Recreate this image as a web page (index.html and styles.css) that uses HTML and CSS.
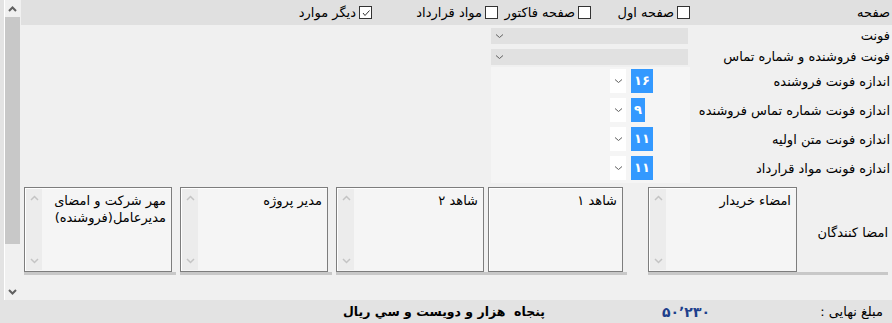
FILE: index.html
```html
<!DOCTYPE html>
<html lang="fa">
<head>
  <meta charset="UTF-8">
  <title>تنظیمات چاپ فاکتور</title>
  <link rel="stylesheet" href="styles.css">
</head>
<body>

<div class="window">
  <div class="panel">
    <div class="edge"></div>
    <div class="vscroll">
      <div class="vscroll-btn">
        <svg width="9" height="6" viewBox="0 0 9 6"><polyline points="1,5 4.5,1.5 8,5" fill="none" stroke="#606060" stroke-width="2"/></svg>
      </div>
      <div class="vscroll-thumb"></div>
      <div class="vscroll-btn bottom">
        <svg width="9" height="6" viewBox="0 0 9 6"><polyline points="1,1 4.5,4.5 8,1" fill="none" stroke="#606060" stroke-width="2"/></svg>
      </div>
    </div>

    <div class="content" dir="rtl">
      <div class="row row-head">
        <div class="label">صفحه</div>
        <div class="checks">
          <label class="check check-1"><span class="box"></span>صفحه اول</label>
          <label class="check check-2"><span class="box"></span>صفحه فاکتور</label>
          <label class="check check-3"><span class="box"></span>مواد قرارداد</label>
          <label class="check"><span class="box checked">
            <svg width="10" height="10" viewBox="0 0 10 10"><polyline points="2,5 4,7.5 8.5,2.5" fill="none" stroke="#333" stroke-width="1"/></svg>
          </span>دیگر موارد</label>
        </div>
      </div>

      <div class="row row-font">
        <div class="label">فونت</div>
        <div class="combo">
          <svg width="9" height="6" viewBox="0 0 9 6"><polyline points="1,1.5 4.5,4.5 8,1.5" fill="none" stroke="#606060" stroke-width="1"/></svg>
        </div>
      </div>
      <div class="row row-font">
        <div class="label">فونت فروشنده و شماره تماس</div>
        <div class="combo">
          <svg width="9" height="6" viewBox="0 0 9 6"><polyline points="1,1.5 4.5,4.5 8,1.5" fill="none" stroke="#606060" stroke-width="1"/></svg>
        </div>
      </div>

      <div class="size-rows">
        <div class="row row-size">
          <div class="label">اندازه فونت فروشنده</div>
          <div class="size-cell">
            <div class="size-combo">
              <div class="size-btn"><svg width="9" height="6" viewBox="0 0 9 6"><polyline points="1,1.5 4.5,4.5 8,1.5" fill="none" stroke="#606060" stroke-width="1"/></svg></div>
              <div class="size-text"><span class="sel">۱۶</span></div>
            </div>
          </div>
        </div>
        <div class="row row-size">
          <div class="label">اندازه فونت شماره تماس فروشنده</div>
          <div class="size-cell">
            <div class="size-combo">
              <div class="size-btn"><svg width="9" height="6" viewBox="0 0 9 6"><polyline points="1,1.5 4.5,4.5 8,1.5" fill="none" stroke="#606060" stroke-width="1"/></svg></div>
              <div class="size-text"><span class="sel">۹</span></div>
            </div>
          </div>
        </div>
        <div class="row row-size">
          <div class="label">اندازه فونت متن اولیه</div>
          <div class="size-cell">
            <div class="size-combo">
              <div class="size-btn"><svg width="9" height="6" viewBox="0 0 9 6"><polyline points="1,1.5 4.5,4.5 8,1.5" fill="none" stroke="#606060" stroke-width="1"/></svg></div>
              <div class="size-text"><span class="sel">۱۱</span></div>
            </div>
          </div>
        </div>
        <div class="row row-size">
          <div class="label">اندازه فونت مواد قرارداد</div>
          <div class="size-cell">
            <div class="size-combo">
              <div class="size-btn"><svg width="9" height="6" viewBox="0 0 9 6"><polyline points="1,1.5 4.5,4.5 8,1.5" fill="none" stroke="#606060" stroke-width="1"/></svg></div>
              <div class="size-text"><span class="sel">۱۱</span></div>
            </div>
          </div>
        </div>
      </div>

      <div class="row row-sign">
        <div class="label label-sign">امضا کنندگان</div>
        <div class="signs">
          <div class="sig sig-1">
            <div class="sig-box">
              <div class="sig-text">امضاء خریدار</div>
              <div class="sig-scroll">
                <svg width="9" height="6" viewBox="0 0 9 6"><polyline points="1,5 4.5,1.5 8,5" fill="none" stroke="#c4c4c4" stroke-width="1.5"/></svg>
                <svg width="9" height="6" viewBox="0 0 9 6"><polyline points="1,1 4.5,4.5 8,1" fill="none" stroke="#c4c4c4" stroke-width="1.5"/></svg>
              </div>
            </div>
            <div class="sig-bar"></div>
          </div>
          <div class="sig sig-2">
            <div class="sig-box">
              <div class="sig-text">شاهد ۱</div>
            </div>
            <div class="sig-bar"></div>
          </div>
          <div class="sig">
            <div class="sig-box">
              <div class="sig-text">شاهد ۲</div>
              <div class="sig-scroll">
                <svg width="9" height="6" viewBox="0 0 9 6"><polyline points="1,5 4.5,1.5 8,5" fill="none" stroke="#c4c4c4" stroke-width="1.5"/></svg>
                <svg width="9" height="6" viewBox="0 0 9 6"><polyline points="1,1 4.5,4.5 8,1" fill="none" stroke="#c4c4c4" stroke-width="1.5"/></svg>
              </div>
            </div>
            <div class="sig-bar"></div>
          </div>
          <div class="sig">
            <div class="sig-box">
              <div class="sig-text">مدیر پروژه</div>
              <div class="sig-scroll">
                <svg width="9" height="6" viewBox="0 0 9 6"><polyline points="1,5 4.5,1.5 8,5" fill="none" stroke="#c4c4c4" stroke-width="1.5"/></svg>
                <svg width="9" height="6" viewBox="0 0 9 6"><polyline points="1,1 4.5,4.5 8,1" fill="none" stroke="#c4c4c4" stroke-width="1.5"/></svg>
              </div>
            </div>
            <div class="sig-bar"></div>
          </div>
          <div class="sig">
            <div class="sig-box">
              <div class="sig-text">مهر شرکت و امضای مدیرعامل(فروشنده)</div>
              <div class="sig-scroll">
                <svg width="9" height="6" viewBox="0 0 9 6"><polyline points="1,5 4.5,1.5 8,5" fill="none" stroke="#c4c4c4" stroke-width="1.5"/></svg>
                <svg width="9" height="6" viewBox="0 0 9 6"><polyline points="1,1 4.5,4.5 8,1" fill="none" stroke="#c4c4c4" stroke-width="1.5"/></svg>
              </div>
            </div>
            <div class="sig-bar"></div>
          </div>
        </div>
      </div>
    </div>
  </div>

  <div class="status" dir="rtl">
    <div class="status-label">مبلغ نهایی :</div>
    <div class="status-amount">۵۰٬۲۳۰</div>
    <div class="status-words">پنجاه  هزار و دويست و سي ريال</div>
  </div>
</div>

</body>
</html>
```

FILE: styles.css
```css
* {
  box-sizing: border-box;
}

body {
  margin: 0;
  background-color: #f0f0f0;
  font-family: "DejaVu Sans", sans-serif;
  font-size: 13px;
  color: #000;
}

.window {
  width: 892px;
  height: 323px;
  display: flex;
  flex-direction: column;
}

.panel {
  height: 300px;
  display: flex;
}

.edge {
  width: 5px;
  background-color: #e3e3e3;
  border-right: 1px solid #fff;
}

/* scroll bar of the panel (on the left because of rtl) */
.vscroll {
  width: 15px;
  margin-right: 1px;
  display: flex;
  flex-direction: column;
}

.vscroll-btn {
  height: 17px;
  display: flex;
  justify-content: center;
  align-items: center;
}

.vscroll-btn.bottom {
  margin-top: auto;
}

.vscroll-thumb {
  height: 227px;
  background-color: #c8c8c8;
}

.content {
  flex: 1;
  display: flex;
  flex-direction: column;
}

.row {
  display: flex;
  align-items: center;
}

.label {
  width: 202px;
  padding-right: 2px;
  white-space: nowrap;
}

.row-head {
  height: 25px;
  background-color: #e0e0e0;
}

.checks {
  display: flex;
}

.check {
  display: flex;
  align-items: center;
  gap: 3px;
  white-space: nowrap;
}

.check-1 { width: 99px; }
.check-2 { width: 93px; }
.check-3 { width: 126px; }

.box {
  width: 13px;
  height: 13px;
  background-color: #fff;
  border: 1px solid #333;
  display: flex;
  justify-content: center;
  align-items: center;
}

.row-font {
  height: 21px;
}

.combo {
  width: 197px;
  height: 16px;
  margin-right: 2px;
  background-color: #e1e1e1;
  display: flex;
  align-items: center;
  justify-content: flex-end;
  padding-left: 4px;
}

.row-size {
  height: 29px;
}

.size-cell {
  width: 199px;
  height: 29px;
  background-color: #f5f5f5;
  display: flex;
  align-items: center;
  direction: ltr;
  justify-content: flex-end;
}

.size-combo {
  width: 80px;
  height: 24px;
  display: flex;
  margin-top: -2px;
}

.size-btn {
  width: 16px;
  background-color: #fff;
  display: flex;
  justify-content: center;
  align-items: center;
}

.size-text {
  padding-left: 5px;
}

.sel {
  display: inline-block;
  height: 24px;
  line-height: 24px;
  padding: 0 3px;
  background-color: #3399ff;
  color: #fff;
  font-weight: bold;
  font-size: 13px;
}

.row-sign {
  height: 89px;
  margin-top: 4px;
  align-items: flex-start;
}

.label-sign {
  width: 95px;
  padding-right: 4px;
  margin-top: 38px;
}

.signs {
  display: flex;
  gap: 8px;
}

.sig {
  width: 148px;
  display: flex;
  flex-direction: column;
}

.sig-1 {
  width: 149px;
  margin-left: 17px;
}

.sig-2 {
  width: 135px;
  margin-left: -4px;
}

.sig-box {
  height: 85px;
  background-color: #f5f5f5;
  border: 1px solid #7d7d7d;
  box-shadow: inset 1px 1px 0 #fff;
  display: flex;
}

.sig-text {
  flex: 1;
  padding: 4px 5px 0 2px;
  line-height: 17px;
}

.sig-scroll {
  width: 16px;
  margin: 1px 0 1px 1px;
  background-color: #ececec;
  display: flex;
  flex-direction: column;
  justify-content: space-between;
  align-items: center;
  padding: 6px 0;
}

.sig-bar {
  height: 3px;
  background-color: #c8c8c8;
  margin-right: -4px;
}

.sig-1 .sig-bar {
  margin-right: -91px;
}

.status {
  height: 23px;
  background-color: #e3e3e3;
  display: flex;
  align-items: center;
}

.status-label {
  width: 182px;
  padding-right: 9px;
}

.status-amount {
  width: 165px;
  color: #1e3f8c;
  font-weight: bold;
  font-size: 14px;
  letter-spacing: 5px;
}

.status-words {
  font-weight: bold;
  font-size: 12.5px;
  white-space: pre;
}
```
